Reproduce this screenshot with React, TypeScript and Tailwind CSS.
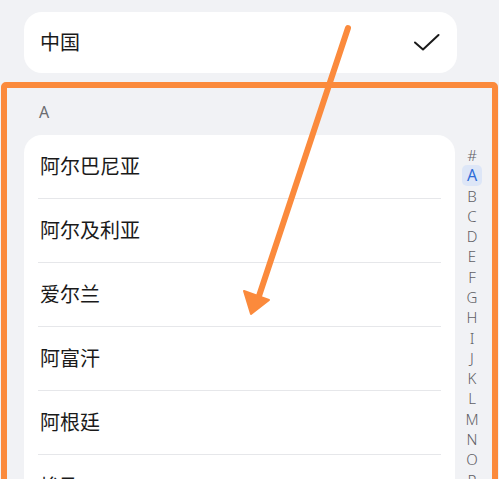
const countries = ["阿尔巴尼亚", "阿尔及利亚", "爱尔兰", "阿富汗", "阿根廷", "埃及"];
const letters = ["#", "A", "B", "C", "D", "E", "F", "G", "H", "I", "J", "K", "L", "M", "N", "O", "P"];

function CheckIcon() {
  return (
    <svg width="26" height="20" viewBox="0 0 26 20" fill="none">
      <path d="M1 9.5 L9 16.5 L24.5 2" stroke="#1a1a1a" strokeWidth="2" strokeLinecap="round" strokeLinejoin="round" />
    </svg>
  );
}

function Annotation() {
  return (
    <svg className="pointer-events-none absolute inset-0" width="499" height="479" viewBox="0 0 499 479">
      <line x1="348" y1="28" x2="259" y2="296" stroke="#fb8a3c" strokeWidth="6" strokeLinecap="round" />
      <polygon points="251,314 244,291 269,300" fill="#fb8a3c" stroke="#fb8a3c" strokeWidth="2" strokeLinejoin="round" />
    </svg>
  );
}

export default function App() {
  return (
    <div
      className="relative h-[479px] w-[499px] overflow-hidden bg-[#f1f2f5]"
      style={{ fontFamily: '"Noto Sans", "Noto Sans CJK SC", sans-serif' }}
    >
      <div className="px-[24px] pt-[12px]">
        <div className="flex h-[61px] w-[433px] items-center justify-between rounded-[18px] bg-white pl-[16px] pr-[17px]">
          <span className="text-[20px] text-[#1a1a1a]">中国</span>
          <CheckIcon />
        </div>
      </div>

      <div className="ml-[1px] mt-[9px] h-[420px] w-[497px] rounded-[5px] border-[6px] border-[#fb8a3c]">
        <div className="flex h-[47px] items-center pl-[32px] text-[16px] text-[#6b6c70]">A</div>
        <div className="flex">
          <div className="ml-[17px] w-[431px] rounded-[18px] bg-white">
            {countries.map((name, i) => (
              <div key={name} className="px-[14px]">
                <div
                  className={
                    "flex h-[64px] items-center pl-[2px] text-[20px] text-[#1a1a1a] " +
                    (i < countries.length - 1 ? "border-b border-[#e6e7ea]" : "")
                  }
                >
                  {name}
                </div>
              </div>
            ))}
          </div>
          <div className="ml-[7px] mt-[10px] flex w-[20px] flex-col items-center">
            {letters.map((l) => (
              <div
                key={l}
                className={
                  l === "A"
                    ? "flex h-[20.3px] w-[20px] items-center justify-center rounded-[5px] bg-[#dde6f7] text-[16px] text-[#2f6cd8]"
                    : "flex h-[20.3px] w-[20px] items-center justify-center text-[15px] font-light text-[#5f6065]"
                }
              >
                {l}
              </div>
            ))}
          </div>
        </div>
      </div>

      <Annotation />
    </div>
  );
}
